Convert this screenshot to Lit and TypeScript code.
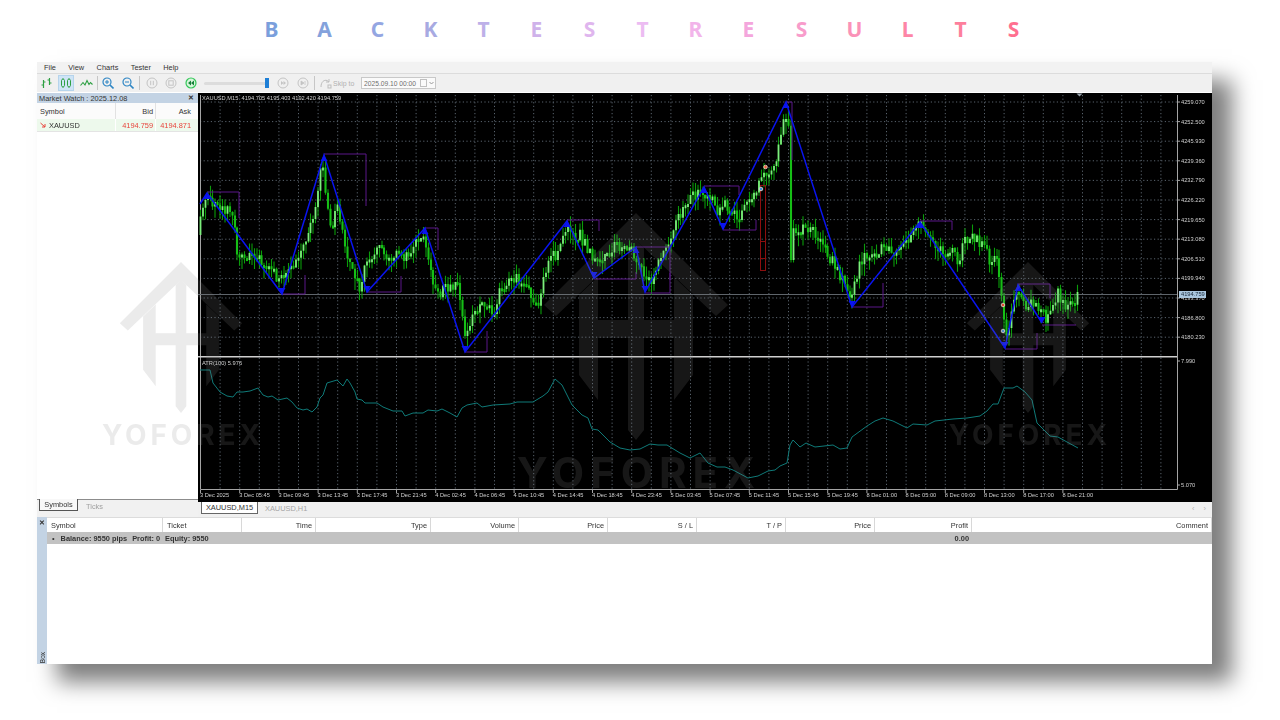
import { LitElement, html, svg, css } from 'lit';
import { customElement } from 'lit/decorators.js';

type Pt = [number, number];

// price trace read off the chart, page coordinates
const TRACE: Pt[] = [
  [200, 235], [201, 210], [207, 200], [215, 208], [222, 205], [230, 215], [236, 225], [237, 250], [245, 255],
  [255, 262], [262, 260], [270, 268], [278, 282], [283, 278], [288, 270], [295, 265], [305, 240], [312, 225],
  [318, 185], [322, 165], [327, 200], [330, 232], [334, 220], [337, 195], [341, 230], [348, 255], [353, 275],
  [360, 290], [365, 270], [370, 258], [378, 250], [390, 255], [400, 258], [410, 250], [418, 240], [423, 240],
  [428, 260], [435, 285], [440, 295], [445, 290], [452, 290], [458, 285], [465, 335], [470, 325], [478, 305],
  [487, 305], [495, 310], [500, 290], [510, 275], [520, 280], [530, 295], [535, 305], [540, 305], [545, 270],
  [552, 258], [560, 250], [567, 225], [572, 240], [580, 235], [590, 255], [595, 265], [602, 255], [615, 248],
  [625, 250], [632, 250], [637, 262], [645, 275], [650, 285], [655, 270], [662, 260], [668, 245], [675, 225],
  [685, 205], [695, 195], [703, 190], [708, 195], [712, 200], [718, 215], [725, 205], [732, 210], [740, 215],
  [748, 205], [755, 195], [760, 185], [765, 170], [772, 172], [778, 150], [783, 125], [788, 118], [789, 135],
  [791, 268], [793.4, 232], [800, 230], [810, 225], [815, 235], [825, 250], [835, 265], [843, 280], [850, 295],
  [855, 285], [860, 265], [868, 255], [875, 260], [880, 250], [890, 250], [900, 250], [910, 235], [918, 225],
  [925, 225], [932, 245], [940, 250], [950, 250], [958, 262], [965, 240], [975, 240], [985, 245], [990, 265],
  [997, 255], [1000, 285], [1003, 310], [1006, 340], [1010, 320], [1015, 300], [1020, 290], [1025, 305],
  [1032, 300], [1038, 310], [1045, 318], [1050, 315], [1058, 295], [1065, 305], [1072, 305], [1080, 293],
];

const ZIGZAG: Pt[] = [
  [200, 204], [207, 193], [282, 294], [324, 155], [367, 292], [425, 228], [465, 352], [567, 221], [594, 278],
  [636, 247], [645, 292], [704, 187], [723, 229], [786, 102], [852, 307], [920, 222], [1005, 348], [1018, 285],
  [1042, 323],
];

const BRACKETS: Pt[][] = [
  [[207, 192], [239, 192], [239, 218]],
  [[282, 294], [305, 294], [305, 275]],
  [[324, 154], [366, 154], [366, 206]],
  [[367, 292], [401, 292], [401, 276]],
  [[425, 228], [438, 228], [438, 250]],
  [[465, 352], [487, 352], [487, 331]],
  [[567, 220], [599, 220], [599, 231]],
  [[594, 279], [636, 279], [636, 272]],
  [[636, 247], [670, 247], [670, 280]],
  [[645, 293], [670, 293], [670, 273]],
  [[704, 186], [739, 186], [739, 195]],
  [[723, 230], [756, 230], [756, 220]],
  [[786, 102], [792, 102], [792, 160]],
  [[852, 307], [883, 307], [883, 283]],
  [[920, 221], [952, 221], [952, 230]],
  [[1005, 349], [1037, 349], [1037, 333]],
  [[1018, 284], [1050, 284], [1050, 298]],
  [[1042, 325], [1076, 325]],
];

const ATR: Pt[] = [
  [200, 370], [210, 370], [213, 383], [220, 392], [227, 396], [233, 397], [237, 392], [243, 392], [250, 391],
  [258, 388], [263, 395], [268, 397], [272, 396], [278, 400], [287, 398], [292, 402], [297, 408], [303, 410],
  [307, 409], [312, 412], [317, 407], [320, 398], [323, 395], [327, 383], [337, 380], [343, 386], [347, 379],
  [350, 383], [355, 392], [357, 399], [362, 400], [365, 403], [377, 403], [383, 407], [393, 411], [402, 411],
  [405, 416], [413, 413], [423, 413], [428, 410], [437, 411], [442, 409], [450, 413], [457, 417], [462, 408],
  [467, 405], [477, 403], [482, 407], [493, 405], [510, 404], [517, 402], [533, 402], [543, 396], [548, 392],
  [555, 379], [562, 385], [567, 395], [572, 405], [582, 415], [588, 418], [592, 429], [598, 430], [610, 442],
  [620, 448], [630, 450], [640, 449], [650, 444], [658, 445], [667, 445], [680, 453], [690, 458], [700, 453],
  [708, 463], [717, 467], [725, 467], [733, 470], [748, 478], [758, 476], [768, 471], [775, 470], [780, 466],
  [787, 463], [790, 445], [793, 440], [800, 447], [806, 443], [815, 447], [833, 445], [840, 449], [847, 448],
  [852, 437], [867, 426], [875, 421], [883, 418], [893, 421], [907, 428], [913, 424], [927, 425], [935, 421],
  [953, 419], [967, 418], [980, 416], [987, 411], [993, 404], [998, 404], [1004, 388], [1013, 388], [1017, 386],
  [1025, 392], [1032, 400], [1037, 423], [1050, 436], [1058, 437], [1067, 442], [1078, 448],
];

const PRICES = [
  '4259.070', '4252.500', '4245.930', '4239.360', '4232.790', '4226.220', '4219.650', '4213.080', '4206.510',
  '4199.940', '4193.370', '4186.800', '4180.230',
];

const TIMES = [
  '3 Dec 2025', '3 Dec 05:45', '3 Dec 09:45', '3 Dec 13:45', '3 Dec 17:45', '3 Dec 21:45', '4 Dec 02:45',
  '4 Dec 06:45', '4 Dec 10:45', '4 Dec 14:45', '4 Dec 18:45', '4 Dec 23:45', '5 Dec 03:45', '5 Dec 07:45',
  '5 Dec 11:45', '5 Dec 15:45', '5 Dec 19:45', '8 Dec 01:00', '8 Dec 05:00', '8 Dec 09:00', '8 Dec 13:00',
  '8 Dec 17:00', '8 Dec 21:00',
];

const TITLE: [string, string][] = [
  ['B', '#7b9fdc'], ['A', '#84a2dc'], ['C', '#94a6e2'], ['K', '#a8aae2'], ['T', '#bdb0e8'], ['E', '#cfb2ea'],
  ['S', '#dfb6ee'], ['T', '#ecbcf2'], ['R', '#f2b4ea'], ['E', '#f4a6dc'], ['S', '#f89ccb'], ['U', '#fb92b8'],
  ['L', '#fd85a6'], ['T', '#fd7f9c'], ['S', '#ff7090'],
];

const COLUMNS: [string, boolean][] = [
  ['Symbol', false], ['Ticket', false], ['Time', true], ['Type', true], ['Volume', true], ['Price', true],
  ['S / L', true], ['T / P', true], ['Price', true], ['Profit', true], ['Comment', true],
];

function at(points: Pt[], x: number) {
  for (let i = 1; i < points.length; i++) {
    if (x <= points[i][0]) {
      const [x0, y0] = points[i - 1];
      const [x1, y1] = points[i];
      return y0 + ((y1 - y0) * (x - x0)) / (x1 - x0);
    }
  }
  return points[points.length - 1][1];
}

function line(points: Pt[]) {
  return points.map((p, i) => `${i ? 'L' : 'M'}${p[0]} ${p[1]}`).join(' ');
}

function candles() {
  let seed = 4194;
  const rnd = () => {
    seed = (seed * 16807) % 2147483647;
    return seed / 2147483647;
  };
  let wicks = '';
  let bodies = '';
  let bright = '';
  const step = 2.45;
  let open = at(TRACE, 200);
  for (let x = 200.5; x < 1080; x += step) {
    const close = at(TRACE, x) + (rnd() - 0.5) * 13;
    const top = Math.min(open, close);
    const bottom = Math.max(open, close, top + 3);
    const px = Math.round(x * 2) / 2;
    wicks += `M${px} ${(top - rnd() * 10).toFixed(1)}V${(bottom + rnd() * 12).toFixed(1)}`;
    const body = `M${px} ${top.toFixed(1)}V${bottom.toFixed(1)}`;
    if (close < open) bright += body;
    else bodies += body;
    open = close;
  }
  return { wicks, bodies, bright };
}

@customElement('app-chart')
export class AppChart extends LitElement {
  static styles = css`
    :host {
      display: block;
      width: 1014px;
      height: 409px;
      background: #000;
    }

    svg {
      display: block;
    }

    text {
      font-family: 'Liberation Sans', sans-serif;
      font-size: 5.7px;
      fill: #d0d0d0;
    }

    .grid {
      stroke: #59636d;
      stroke-dasharray: 1.2 2.4;
      fill: none;
    }

    .frame {
      stroke: #a4a4a4;
      fill: none;
    }

    .wick {
      stroke: #0a9c0a;
      stroke-width: 1.1;
      fill: none;
    }

    .body {
      stroke: #16bf16;
      stroke-width: 2.1;
      fill: none;
    }

    .bright {
      stroke: #7cee7c;
      stroke-width: 1.8;
      fill: none;
    }

    .bracket {
      stroke: #5b1689;
      stroke-width: 1;
      fill: none;
    }

    .zigzag {
      stroke: #0a14f0;
      stroke-width: 1.5;
      fill: none;
    }

    .atr {
      stroke: #0f7a78;
      stroke-width: 1;
      fill: none;
    }

    .quote {
      fill: #1a2a3a;
    }
  `;

  render() {
    const { wicks, bodies, bright } = candles();
    const xs = Array.from({ length: 50 }, (_, i) => 200.5 + 19.6 * i);
    const ys = PRICES.map((_, i) => 102 + 19.6 * i);
    return html`<svg width="1014" height="409" viewBox="198 93 1014 409">
      <path class="grid" d=${xs.map((x) => `M${x.toFixed(1)} 95V490`).join('')} />
      <path class="grid" d=${ys.map((y) => `M200 ${y.toFixed(1)}H1177`).join('')} />
      <path class="frame" d="M200.5 95V489.5H1177.5V95" />
      <path class="frame" d=${ys.map((y) => `M1177 ${y.toFixed(1)}h3`).join('')} />
      <path class="frame" d="M1177 361h3M1177 485h3" />
      <path class="frame" d=${TIMES.map((_, i) => `M${(200.5 + 39.2 * i).toFixed(1)} 490v3`).join('')} />
      <path d="M198 294.5H1177" stroke="#5f656b" />
      <path d="M198 356.8H1177" stroke="#cfcfcf" stroke-width="1.6" />

      <path class="wick" d=${wicks} />
      <path class="body" d=${bodies} />
      <path class="bright" d=${bright} />

      ${BRACKETS.map((b) => svg`<path class="bracket" d=${line(b)} />`)}

      <g fill="none" stroke="#8b0f0f">
        <rect x="760.5" y="185.5" width="5" height="85" />
        <path d="M760.5 241.5h5M760.5 258.5h5" />
      </g>

      <path class="zigzag" d=${line(ZIGZAG)} />
      ${ZIGZAG.slice(1).map((p, i) => {
        const up = p[1] < ZIGZAG[i][1];
        const dy = up ? 6 : -6;
        return svg`<path fill="#0a14f0" d="M${p[0]} ${p[1]}L${p[0] - 3.5} ${p[1] + dy}L${p[0] + 3.5} ${p[1] + dy}Z" />`;
      })}

      ${[[765.5, 167, '#f0623c'], [761, 189, '#3f8fd8'], [1003, 305, '#e84a30'], [1003, 331, '#4f8fd0']].map(
        ([x, y, c]) => svg`<circle cx=${x} cy=${y} r="1.8" fill=${c as string} stroke="#e8e0d0" stroke-width=".8" />`,
      )}

      <path class="atr" d=${line(ATR)} />

      <text x="202" y="100">XAUUSD,M15&nbsp; 4194.705 4195.403 4192.420 4194.759</text>
      <text x="202" y="365">ATR(100) 5.976</text>
      ${PRICES.map((p, i) => svg`<text x="1181" y=${ys[i] + 2}>${p}</text>`)}
      <text x="1181" y="363">7.990</text>
      <text x="1181" y="487">5.070</text>
      ${TIMES.map((t, i) => svg`<text x=${200 + 39.2 * i} y="497">${t}</text>`)}

      <rect x="1179" y="291" width="27" height="7" fill="#a9c6de" />
      <text class="quote" x="1181" y="296.4">4194.759</text>
      <path d="M1076.5 93.5h6l-3 3z" fill="#9aa4ae" />
    </svg>`;
  }
}

@customElement('app-root')
export class AppRoot extends LitElement {
  static styles = css`
    :host {
      display: block;
      width: 1280px;
      height: 720px;
      overflow: hidden;
      background: #fff;
      font-family: 'Liberation Sans', sans-serif;
      font-size: 7.4px;
      color: #333;
    }

    .title {
      height: 62px;
      padding: 0 0 4px 245px;
      box-sizing: border-box;
      display: grid;
      grid-template-columns: repeat(15, 53px);
      align-items: center;
      justify-items: center;
      font-family: 'Noto Sans', sans-serif;
      font-size: 21px;
      font-weight: 700;
    }

    .window {
      position: relative;
      margin-left: 37px;
      width: 1175px;
      height: 602px;
      background: #fff;
      box-shadow: 20px 18px 21px #7e7e7e;
      display: flex;
      flex-direction: column;
      filter: blur(0.5px);
    }

    .menu {
      height: 11px;
      padding-left: 7px;
      display: flex;
      align-items: center;
      gap: 12.4px;
      background: #f2f2f2;
      border-bottom: 1px solid #dcdcdc;
    }

    .toolbar {
      height: 18px;
      padding-left: 3px;
      display: flex;
      align-items: center;
      background: #f0f0f0;
    }

    .toolbar svg {
      display: block;
      flex: none;
    }

    .g1 { margin-left: 1px; }
    .g4 { margin-left: 4px; }
    .g5 { margin-left: 5px; }
    .g6 { margin-left: 6px; }
    .g7 { margin-left: 7px; }
    .g8 { margin-left: 8px; }

    .active {
      width: 16px;
      height: 16px;
      background: #cfe4f6;
      border: 1px solid #b6d4ec;
      box-sizing: border-box;
      display: grid;
      place-items: center;
    }

    .sep {
      width: 1px;
      height: 14px;
      background: #c6c6c6;
    }

    .slider {
      position: relative;
      width: 65px;
      height: 3px;
      background: #dcdcdc;
      border-radius: 2px;
    }

    .thumb {
      position: absolute;
      right: 0;
      top: -4px;
      width: 4px;
      height: 10px;
      background: #1e7fd6;
    }

    .skip {
      width: 22px;
      color: #b0b0b0;
      white-space: nowrap;
      font-size: 7px;
    }

    .date {
      width: 75px;
      height: 12px;
      box-sizing: border-box;
      border: 1px solid #c8c8c8;
      background: #fafafa;
      color: #6e6e6e;
      display: flex;
      align-items: center;
      padding-left: 2px;
      gap: 4px;
      white-space: nowrap;
      font-size: 6.7px;
    }

    .main {
      height: 425px;
      display: flex;
    }

    .side {
      width: 161px;
      display: flex;
      flex-direction: column;
    }

    .watch-head {
      margin-top: 1px;
      height: 10px;
      padding: 0 4px 0 2px;
      display: flex;
      justify-content: space-between;
      align-items: center;
      background: #c3d3e4;
    }

    .close {
      font-weight: 700;
      font-size: 7px;
    }

    .watch-row {
      display: grid;
      grid-template-columns: 78px 40px 38px;
      padding-right: 5px;
    }

    .watch-row > div {
      display: flex;
      align-items: center;
      justify-content: flex-end;
      padding-right: 2px;
    }

    .watch-row > div:first-child {
      justify-content: flex-start;
      padding-left: 3px;
      gap: 3px;
    }

    .watch-head-row {
      height: 16px;
      background: #fbfbfb;
    }

    .watch-head-row > div + div {
      border-left: 1px solid #e2e2e2;
    }

    .watch-quote {
      height: 12px;
      background: #edf9ec;
      border-bottom: 1px solid #e4e4e4;
      color: #333;
    }

    .red {
      color: #e8443c;
    }

    .watch-quote > div + div {
      border-left: 1px solid #fff;
    }

    .spacer {
      flex: 1;
    }

    .side-tabs {
      height: 17px;
      background: #f1f1f1;
      border-top: 1px solid #8c8c8c;
      display: flex;
      padding-left: 2px;
      align-items: flex-start;
    }

    .side-tab {
      height: 12px;
      width: 39px;
      margin-top: -1px;
      box-sizing: border-box;
      background: #f8f8f8;
      border: 1px solid #555;
      border-top: 0;
      display: grid;
      place-items: center;
    }

    .side-tab-off {
      color: #a0a0a0;
      margin-left: 8px;
      margin-top: 2px;
    }

    .center {
      width: 1014px;
      display: flex;
      flex-direction: column;
      padding-top: 1px;
    }

    .chart-tabs {
      height: 15px;
      display: flex;
      background: #f0f0f0;
      padding-left: 3px;
      align-items: flex-start;
      position: relative;
    }

    .chart-tab {
      width: 57px;
      height: 12px;
      box-sizing: border-box;
      background: #fff;
      border: 1px solid #666;
      border-top: 0;
      display: grid;
      place-items: center;
    }

    .chart-tab-off {
      color: #a4a4a4;
      margin-left: 7px;
      margin-top: 2px;
    }

    .arrows {
      margin-left: auto;
      padding: 2px 6px 0 0;
      display: flex;
      gap: 9px;
      color: #b0b0b0;
    }

    .terminal {
      flex: 1;
      display: flex;
    }

    .stripe {
      width: 10px;
      background: #c3d3e4;
      display: flex;
      flex-direction: column;
      align-items: center;
      justify-content: space-between;
      padding: 2px 0 1px;
      box-sizing: border-box;
    }

    .box {
      writing-mode: vertical-rl;
      transform: rotate(180deg);
      font-size: 6.5px;
    }

    .table {
      flex: 1;
      border-top: 1px solid #dcdcdc;
    }

    .row {
      display: grid;
      grid-template-columns: 116px 79px 74px 115px 88px 89px 89px 89px 89px 97px 240px;
    }

    .cols {
      height: 14px;
    }

    .cols > div {
      display: flex;
      align-items: center;
      padding: 0 3px 0 4px;
      border-right: 1px solid #d8d8d8;
      box-sizing: border-box;
    }

    .cols > div.right {
      justify-content: flex-end;
    }

    .total {
      height: 12px;
      background: #c2c2c2;
      font-weight: 700;
      align-items: center;
    }

    .balance {
      grid-column: 1 / 10;
      padding-left: 5px;
      display: flex;
      gap: 5px;
    }

    .balance span:first-child {
      margin-right: 1px;
      font-weight: 400;
    }

    .total-profit {
      text-align: right;
      padding-right: 3px;
    }

    .marks {
      position: absolute;
      left: 0;
      top: 0;
      pointer-events: none;
    }

    .marks text {
      font-family: Inter, sans-serif;
      font-weight: 700;
      font-size: 42px;
      fill: #8a8a8a;
    }
  `;

  private logo(x: number, y: number, s: number) {
    return svg`<g transform="translate(${x} ${y}) scale(${s})" opacity=".17">
      <path fill="#8a8a8a" d="M0 0L92 92L80 103L0 27L-80 103L-92 92Z
        M-57 82L-38 64V107H-8V35L0 27L8 35V107H38V64L57 82V162L38 187V125H8V217L0 227L-8 217V125H-38V187L-57 162Z" />
      <text x="-119" y="275" textLength="238">YOFOREX</text>
    </g>`;
  }

  render() {
    return html`
      <div class="title">${TITLE.map(([c, color]) => html`<span style="color:${color}">${c}</span>`)}</div>
      <div class="window">
        <div class="menu">
          <span>File</span><span>View</span><span>Charts</span><span>Tester</span><span>Help</span>
        </div>
        <div class="toolbar">
          <svg width="13" height="12" viewBox="0 0 13 12" fill="none" stroke="#2ea043" stroke-width="1.2">
            <path d="M3.5 3V11M1.5 8H3.5M3.5 5H5.5M9.5 1V8M7.5 3H9.5M9.5 6H11.5" />
          </svg>
          <div class="active g5">
            <svg width="12" height="12" viewBox="0 0 12 12" fill="none" stroke="#2ea043">
              <path d="M3 1V2M3 10V11M9 1V2M9 10V11" />
              <rect x="1.5" y="2.5" width="3" height="7" rx="1" />
              <rect x="7.5" y="2.5" width="3" height="7" rx="1" />
            </svg>
          </div>
          <svg class="g6" width="13" height="12" viewBox="0 0 13 12" fill="none" stroke="#2ea043" stroke-width="1.1">
            <path d="M.5 8.5L3 5.5L5 8L7 3.5L9 7.5L10.5 5.5L12.5 7.5" />
          </svg>
          <div class="sep g4"></div>
          ${this.magnifier('g4', true)} ${this.magnifier('g8', false)}
          <div class="sep g5"></div>
          <svg class="g6" width="12" height="12" viewBox="0 0 12 12" fill="none" stroke="#c4c4c4">
            <circle cx="6" cy="6" r="5" /><path d="M4.7 3.8V8.2M7.3 3.8V8.2" />
          </svg>
          <svg class="g7" width="12" height="12" viewBox="0 0 12 12" fill="none" stroke="#c4c4c4">
            <circle cx="6" cy="6" r="5" /><rect x="3.8" y="3.8" width="4.4" height="4.4" />
          </svg>
          <svg class="g8" width="12" height="12" viewBox="0 0 12 12">
            <circle cx="6" cy="6" r="5" fill="#d8f6dc" stroke="#35c75a" stroke-width="1.2" />
            <path d="M6 3.5L3 6L6 8.5ZM9 3.5L6 6L9 8.5Z" fill="#16803a" />
          </svg>
          <div class="slider g7"><div class="thumb"></div></div>
          <svg class="g8" width="12" height="12" viewBox="0 0 12 12" fill="#c4c4c4" stroke="#c4c4c4">
            <circle cx="6" cy="6" r="5" fill="none" /><path d="M4 4L6.5 6L4 8ZM6.5 4L9 6L6.5 8Z" stroke="none" />
          </svg>
          <svg class="g8" width="12" height="12" viewBox="0 0 12 12" fill="#c4c4c4" stroke="#c4c4c4">
            <circle cx="6" cy="6" r="5" fill="none" /><path d="M4 4L7 6L4 8ZM8 4V8" stroke-width=".8" />
          </svg>
          <div class="sep g5"></div>
          <svg class="g5" width="12" height="12" viewBox="0 0 12 12" fill="none" stroke="#bdbdbd">
            <path d="M1 10C1 5 4 2.5 7 3.5L9 5M9 2V5H6" /><rect x="8" y="8" width="3" height="3" />
          </svg>
          <span class="skip g1">Skip to</span>
          <div class="date g6">
            <span>2025.09.10 00:00</span>
            <svg width="14" height="8" viewBox="0 0 14 8" fill="none" stroke="#c0c0c0">
              <rect x=".5" y=".5" width="6" height="7" />
              <path d="M9.5 3L11.5 5L13.5 3" stroke="#999" />
            </svg>
          </div>
        </div>

        <div class="main">
          <div class="side">
            <div class="watch-head"><span>Market Watch : 2025.12.08</span><span class="close">✕</span></div>
            <div class="watch-row watch-head-row">
              <div>Symbol</div><div>Bid</div><div>Ask</div>
            </div>
            <div class="watch-row watch-quote">
              <div>
                <svg width="6" height="6" viewBox="0 0 6 6" fill="none" stroke="#e8443c">
                  <path d="M.5 1L5 5M5 2V5H2" />
                </svg>
                XAUUSD
              </div>
              <div class="red">4194.759</div>
              <div class="red">4194.871</div>
            </div>
            <div class="spacer"></div>
            <div class="side-tabs">
              <div class="side-tab">Symbols</div>
              <div class="side-tab-off">Ticks</div>
            </div>
          </div>
          <div class="center">
            <app-chart></app-chart>
            <div class="chart-tabs">
              <div class="chart-tab">XAUUSD,M15</div>
              <div class="chart-tab-off">XAUUSD,H1</div>
              <div class="arrows"><span>‹</span><span>›</span></div>
            </div>
          </div>
        </div>

        <div class="terminal">
          <div class="stripe">
            <span class="close">✕</span>
            <span class="box">Box</span>
          </div>
          <div class="table">
            <div class="row cols">
              ${COLUMNS.map(([name, right]) => html`<div class=${right ? 'right' : ''}>${name}</div>`)}
            </div>
            <div class="row total">
              <div class="balance">
                <span>•</span><span>Balance: 9550 pips</span><span>Profit: 0</span><span>Equity: 9550</span>
              </div>
              <div class="total-profit">0.00</div>
            </div>
          </div>
        </div>

        <svg class="marks" width="1175" height="602" viewBox="37 62 1175 602">
          ${this.logo(181, 262, 0.665)} ${this.logo(636, 213, 1)} ${this.logo(1028, 262, 0.665)}
        </svg>
      </div>
    `;
  }

  private magnifier(gap: string, plus: boolean) {
    return html`<svg class=${gap} width="12" height="12" viewBox="0 0 12 12" fill="none" stroke="#2f86c4" stroke-width="1.2">
      <circle cx="5" cy="5" r="4" />
      <path d="M8 8L11.5 11.5" stroke-width="1.6" />
      <path d=${plus ? 'M3 5H7M5 3V7' : 'M3 5H7'} stroke-width="1" />
    </svg>`;
  }
}
